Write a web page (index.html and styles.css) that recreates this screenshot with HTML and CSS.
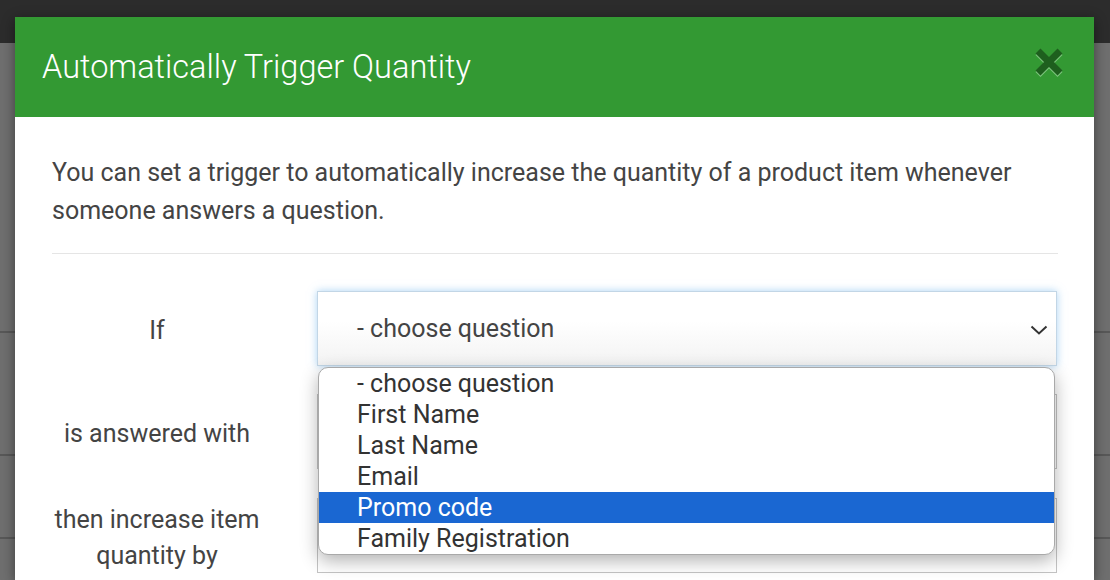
FILE: index.html
```html
<!DOCTYPE html>
<html lang="en">
<head>
<meta charset="utf-8">
<title>Automatically Trigger Quantity</title>
<link rel="stylesheet" href="styles.css">
</head>
<body>
<div class="page">
  <div class="topbar"></div>
  <div class="bg-row bg-row-1"></div>
  <div class="bg-row bg-row-2"></div>
  <div class="bg-row bg-row-3"></div>
</div>

<div class="modal">
  <div class="modal-header">
    <h1 class="modal-title">Automatically Trigger Quantity</h1>
    <button class="close" type="button" aria-label="Close">
      <svg viewBox="0 0 30 30" width="30" height="30" class="close-icon">
        <path d="M4 4 L26 26 M26 4 L4 26" stroke="#7dc57d" stroke-width="7" fill="none" transform="translate(0,1.5)"/>
        <path d="M4 4 L26 26 M26 4 L4 26" stroke="#1e5f1e" stroke-width="7" fill="none"/>
      </svg>
    </button>
  </div>
  <div class="modal-body">
    <p class="intro">You can set a trigger to automatically increase the quantity of a product item whenever someone answers a question.</p>
    <hr class="divider">
    <div class="form">
      <div class="form-row">
        <label class="form-label">If</label>
        <div class="field-wrap">
          <div class="select focused">
            <span class="select-value">- choose question</span>
            <svg class="chevron" viewBox="0 0 18 10" width="18" height="10">
              <path d="M1.5 1.5 L9 8.5 L16.5 1.5" stroke="#333" stroke-width="2" fill="none"/>
            </svg>
          </div>
          <ul class="dropdown">
            <li class="option">- choose question</li>
            <li class="option">First Name</li>
            <li class="option">Last Name</li>
            <li class="option">Email</li>
            <li class="option selected">Promo code</li>
            <li class="option">Family Registration</li>
          </ul>
        </div>
      </div>
      <div class="form-row">
        <label class="form-label">is answered with</label>
        <div class="field"></div>
      </div>
      <div class="form-row">
        <label class="form-label">then increase item<br>quantity by</label>
        <div class="field"></div>
      </div>
    </div>
  </div>
</div>
</body>
</html>
```

FILE: styles.css
```css
* { box-sizing: border-box; }

html, body {
  margin: 0;
  padding: 0;
  height: 100%;
  overflow: hidden;
}

body {
  font-family: Roboto, "Liberation Sans", sans-serif;
  background: #6f6f6f;
  position: relative;
}

.page {
  display: flex;
  flex-direction: column;
}

.topbar {
  height: 43px;
  background: #2c2c2c;
}

.bg-row {
  border-bottom: 2px solid #585858;
}
.bg-row-1 { height: 290px; }
.bg-row-2 { height: 123px; }
.bg-row-3 { height: 83px; }

.modal {
  position: absolute;
  left: 15px;
  top: 17px;
  width: 1079px;
  height: 563px;
  overflow: hidden;
  background: #fff;
  box-shadow: 0 3px 12px rgba(0, 0, 0, 0.45);
}

.modal-header {
  height: 100px;
  background: #339933;
  display: flex;
  align-items: center;
  justify-content: space-between;
  padding: 0 30px 0 27px;
}

.modal-title {
  margin: 0;
  font-family: Roboto, "Liberation Sans", sans-serif;
  font-weight: 300;
  font-size: 32.5px;
  color: #fff;
}

.close {
  border: 0;
  background: transparent;
  padding: 0;
  margin: -8px 0 0 0;
  width: 30px;
  height: 32px;
  display: flex;
  align-items: flex-start;
}

.close-icon { display: block; }

.modal-body {
  padding: 37px 36px 0 37px;
  color: #444;
}

.intro {
  margin: 0;
  font-size: 25px;
  line-height: 37.5px;
}

.divider {
  margin: 24px 0 37px 0;
  border: 0;
  border-top: 1px solid #e5e5e5;
}

.form {
  display: flex;
  flex-direction: column;
  gap: 28px;
}

.form-row {
  display: grid;
  grid-template-columns: 210px 740px;
  column-gap: 55px;
  align-items: center;
}

.form-label {
  text-align: center;
  font-size: 25px;
  line-height: 36px;
  color: #444;
  padding-top: 5px;
}

.field-wrap {
  position: relative;
}

.select {
  height: 75px;
  border: 1px solid #ccc;
  background: linear-gradient(#ffffff 40%, #f3f3f3);
  display: flex;
  align-items: center;
  justify-content: space-between;
  padding: 0 8px 0 39px;
}

.select.focused {
  border-color: #c2d6e6;
  box-shadow: 0 0 8px rgba(102, 175, 233, 0.55);
}

.select-value {
  font-size: 25px;
  color: #444;
}

.chevron { display: block; margin-top: 2px; }

.field {
  height: 75px;
  border: 1px solid #c4c4c4;
  background: #fff;
}

.dropdown {
  position: absolute;
  left: 1px;
  top: 76px;
  width: 737px;
  margin: 0;
  padding: 0;
  list-style: none;
  background: #fff;
  border: 1.5px solid #a9a9a9;
  border-radius: 10px;
  overflow: hidden;
  box-shadow: 0 6px 18px rgba(0, 0, 0, 0.3);
  z-index: 5;
}

.option {
  height: 31px;
  line-height: 31px;
  padding-left: 38px;
  font-size: 25px;
  color: #333;
}

.option.selected {
  background: #1a67d2;
  color: #fff;
}
```
